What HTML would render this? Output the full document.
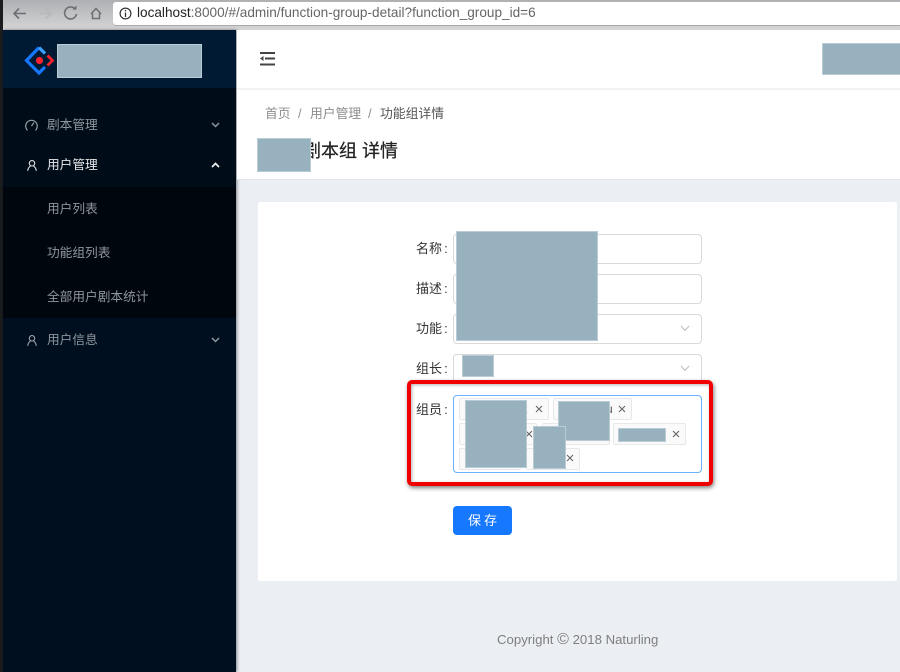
<!DOCTYPE html>
<html lang="zh">
<head>
<meta charset="utf-8">
<style>
html,body{margin:0;padding:0}
body{width:900px;height:672px;overflow:hidden;position:relative;background:#ebeef3;font-family:"Liberation Sans","Noto Sans CJK SC",sans-serif;color:#333}
#w{position:absolute;left:0;top:0;width:900px;height:672px;filter:blur(.35px)}
.a{position:absolute}
.t{position:absolute;white-space:nowrap;line-height:20px}
.blur{position:absolute;background:#97b1bf;box-shadow:0 0 0 1px #b9cbd5}
.input{position:absolute;left:453px;width:247px;height:28px;background:#fff;border:1px solid #d9d9d9;border-radius:4px}
.tag{position:absolute;background:#fafafa;border:1px solid #e8e8e8;border-radius:2px;height:20px}
.label{position:absolute;left:416px;font-size:13px;line-height:20px;color:#333;white-space:nowrap;word-spacing:-1.500px}
.menu{font-size:12.700px}
.x{position:absolute}
</style>
</head>
<body>
<div id="w">
<!-- browser chrome -->
<div class="a" style="left:0;top:0;width:900px;height:30px;background:linear-gradient(#aeb0b3,#d6d6d7)"></div>
<div class="a" style="left:0;top:0;width:3px;height:672px;background:#1a1c1e"></div>
<div class="a" style="left:113px;top:2px;width:787px;height:23px;background:#fff;border-radius:3px 0 0 3px;box-shadow:0 1px 0 #a9a9a9"></div>
<div class="a" style="left:113px;top:28px;width:787px;height:2px;background:#d4d4d4"></div>
<svg class="a" style="left:10px;top:4px" width="105" height="20" viewBox="0 0 105 20" fill="none">
<path d="M4 9.500H16M9 4.500L4 9.500L9 14.500" stroke="#6d6f72" stroke-width="1.600"/>
<path d="M29 9.500H41M36 4.500L41 9.500L36 14.500" stroke="#b5b7ba" stroke-width="1.600"/>
<path d="M65.500 5.500A6 6 0 1 0 66.500 10" stroke="#6d6f72" stroke-width="1.600"/>
<path d="M62.500 5.500H66.500V1.500Z" fill="#6d6f72"/>
<path d="M81 10L86 4.500L91 10M82.500 9V14.500H89.500V9" stroke="#6d6f72" stroke-width="1.500"/>
</svg>
<svg class="a" style="left:119px;top:7px" width="13" height="13" viewBox="0 0 13 13" fill="none">
<circle cx="6.500" cy="6.500" r="5.400" stroke="#333" stroke-width="1.200"/>
<path d="M6.500 5.500V10M6.500 3V4.400" stroke="#333" stroke-width="1.300"/>
</svg>
<div class="t" style="left:137px;top:3px;font-size:13.600px;color:#666"><span style="color:#222">localhost</span>:8000/#/admin/function-group-detail?function_group_id=6</div>

<!-- sidebar -->
<div class="a" style="left:3px;top:30px;width:233px;height:642px;background:#001529;box-shadow:1px 0 3px rgba(0,0,0,.45)"></div>
<div class="a" style="left:3px;top:30px;width:233px;height:58px;background:#001a33"></div>
<div class="a" style="left:3px;top:88px;width:233px;height:99px;background:#000c18"></div>
<div class="a" style="left:3px;top:187px;width:233px;height:131px;background:#00060d"></div>
<div class="a" style="left:3px;top:318px;width:233px;height:354px;background:#000f1f"></div>
<svg class="a" style="left:24px;top:45px" width="32" height="32" viewBox="0 0 32 32" fill="none">
<path d="M15 2.500L2.500 15.500L15 28L21 22" stroke="#1677ff" stroke-width="3.200"/>
<path d="M15 2.500L21 8.500" stroke="#3aa0ff" stroke-width="3.200"/>
<path d="M23.500 10.500L28.500 15.500L23.500 20.500" stroke="#f5222d" stroke-width="2.800"/>
<circle cx="15.500" cy="15.500" r="3.600" fill="#f5222d"/>
</svg>
<div class="blur" style="left:58px;top:45px;width:143px;height:32px"></div>

<svg class="a" style="left:25px;top:119px" width="13" height="12" viewBox="0 0 13 12" fill="none">
<path d="M2.500 11.300A5.800 5.800 0 1 1 10.500 11.300" stroke="#9ea5ab" stroke-width="1.100"/>
<path d="M6.500 7L9 3.500" stroke="#9ea5ab" stroke-width="1.100"/>
</svg>
<div class="t menu" style="left:47px;top:115px;color:#8f979d">剧本管理</div>
<svg class="a" style="left:211px;top:122px" width="9" height="6" viewBox="0 0 9 6" fill="none"><path d="M1 1L4.500 4.500L8 1" stroke="#8f979d" stroke-width="1.500"/></svg>

<svg class="a" style="left:27px;top:160px" width="10" height="11" viewBox="0 0 10 11" fill="none">
<circle cx="5" cy="3.300" r="2.700" stroke="#e4e6e8" stroke-width="1.100"/>
<path d="M.7 10.800C1 8 2.600 6.600 3.300 6M9.300 10.800C9 8 7.400 6.600 6.700 6" stroke="#e4e6e8" stroke-width="1.100"/>
</svg>
<div class="t menu" style="left:47px;top:155px;color:#e6e8ea">用户管理</div>
<svg class="a" style="left:211px;top:162px" width="9" height="6" viewBox="0 0 9 6" fill="none"><path d="M1 5L4.500 1.500L8 5" stroke="#f0f0f0" stroke-width="1.700"/></svg>

<div class="t menu" style="left:47px;top:199px;color:#8f979d">用户列表</div>
<div class="t menu" style="left:47px;top:243px;color:#8f979d">功能组列表</div>
<div class="t menu" style="left:47px;top:287px;color:#8f979d">全部用户剧本统计</div>

<svg class="a" style="left:27px;top:335px" width="10" height="11" viewBox="0 0 10 11" fill="none">
<circle cx="5" cy="3.300" r="2.700" stroke="#9ea5ab" stroke-width="1.100"/>
<path d="M.7 10.800C1 8 2.600 6.600 3.300 6M9.300 10.800C9 8 7.400 6.600 6.700 6" stroke="#9ea5ab" stroke-width="1.100"/>
</svg>
<div class="t menu" style="left:47px;top:330px;color:#8f979d">用户信息</div>
<svg class="a" style="left:211px;top:337px" width="9" height="6" viewBox="0 0 9 6" fill="none"><path d="M1 1L4.500 4.500L8 1" stroke="#8f979d" stroke-width="1.500"/></svg>

<!-- header -->
<div class="a" style="left:237px;top:30px;width:663px;height:58px;background:#fff;border-bottom:2px solid #f1f2f4"></div>
<svg class="a" style="left:259px;top:51px" width="17" height="16" viewBox="0 0 17 16" fill="none">
<path d="M1 2H16M6 7.500H16M1 13.500H16" stroke="#444" stroke-width="1.900"/>
<path d="M4.500 5V10L1 7.500Z" fill="#444"/>
</svg>
<div class="blur" style="left:823px;top:44px;width:77px;height:30px"></div>

<!-- page head -->
<div class="a" style="left:237px;top:90px;width:663px;height:89px;background:#fff;border-bottom:1px solid #e4e6ea"></div>
<div class="t" style="left:265px;top:104px;font-size:12.800px;color:#8c8c8c">首页</div>
<div class="t" style="left:298px;top:104px;font-size:12.800px;color:#8c8c8c">/</div>
<div class="t" style="left:310px;top:104px;font-size:12.800px;color:#8c8c8c">用户管理</div>
<div class="t" style="left:368px;top:104px;font-size:12.800px;color:#8c8c8c">/</div>
<div class="t" style="left:380px;top:104px;font-size:12.800px;color:#555">功能组详情</div>
<div class="t" style="left:303px;top:139px;font-size:18px;line-height:24px;color:#222;-webkit-text-stroke:.25px #222">剧本组 详情</div>
<div class="blur" style="left:258px;top:139px;width:52px;height:32px"></div>

<!-- card -->
<div class="a" style="left:258px;top:202px;width:639px;height:379px;background:#fff;border-radius:2px"></div>

<div class="label" style="top:239px">名称 :</div>
<div class="label" style="top:279px">描述 :</div>
<div class="label" style="top:319px">功能 :</div>
<div class="label" style="top:359px">组长 :</div>
<div class="label" style="top:400px">组员 :</div>

<div class="input" style="top:234px"></div>
<div class="input" style="top:274px"></div>
<div class="input" style="top:314px"></div>
<div class="input" style="top:354px"></div>
<svg class="a" style="left:680px;top:325px" width="10" height="7" viewBox="0 0 10 7" fill="none"><path d="M1 1L5 5.500L9 1" stroke="#bfbfbf" stroke-width="1.100"/></svg>
<svg class="a" style="left:680px;top:365px" width="10" height="7" viewBox="0 0 10 7" fill="none"><path d="M1 1L5 5.500L9 1" stroke="#bfbfbf" stroke-width="1.100"/></svg>
<div class="blur" style="left:463px;top:356px;width:30px;height:20px"></div>
<div class="blur" style="left:457px;top:232px;width:140px;height:108px"></div>

<!-- members -->
<div class="a" style="left:453px;top:395px;width:247px;height:76px;background:#fff;border:1px solid #69b1ff;border-radius:4px"></div>
<div class="tag" style="left:459px;top:398px;width:88px"></div>
<div class="tag" style="left:553px;top:398px;width:77px"></div>
<div class="tag" style="left:459px;top:423px;width:76px"></div>
<div class="tag" style="left:542px;top:423px;width:66px"></div>
<div class="tag" style="left:613px;top:423px;width:71px"></div>
<div class="tag" style="left:459px;top:448px;width:60px"></div>
<div class="tag" style="left:526px;top:448px;width:52px"></div>
<div class="t" style="left:524px;top:399px;font-size:12px;color:#555">t</div>
<div class="t" style="left:606px;top:399px;font-size:12px;color:#555">u</div>
<svg class="x" style="left:535px;top:405px" width="8" height="8" viewBox="0 0 8 8" fill="none"><path d="M1 1L7 7M7 1L1 7" stroke="#666" stroke-width="1.100"/></svg>
<svg class="x" style="left:618px;top:405px" width="8" height="8" viewBox="0 0 8 8" fill="none"><path d="M1 1L7 7M7 1L1 7" stroke="#666" stroke-width="1.100"/></svg>
<svg class="x" style="left:525px;top:430px" width="8" height="8" viewBox="0 0 8 8" fill="none"><path d="M1 1L7 7M7 1L1 7" stroke="#666" stroke-width="1.100"/></svg>
<svg class="x" style="left:672px;top:430px" width="8" height="8" viewBox="0 0 8 8" fill="none"><path d="M1 1L7 7M7 1L1 7" stroke="#666" stroke-width="1.100"/></svg>
<svg class="x" style="left:566px;top:454px" width="8" height="8" viewBox="0 0 8 8" fill="none"><path d="M1 1L7 7M7 1L1 7" stroke="#666" stroke-width="1.100"/></svg>
<div class="blur" style="left:466px;top:401px;width:60px;height:66px"></div>
<div class="blur" style="left:559px;top:402px;width:50px;height:38px"></div>
<div class="blur" style="left:534px;top:427px;width:31px;height:41px"></div>
<div class="blur" style="left:619px;top:429px;width:46px;height:12px"></div>

<!-- red highlight -->
<div class="a" style="left:407px;top:380px;width:298px;height:98px;border:4px solid #f00000;border-radius:5px;box-shadow:1px 2px 4px rgba(0,0,0,.5),inset 1px 1px 3px rgba(0,0,0,.3)"></div>

<!-- button -->
<div class="a" style="left:453px;top:506px;width:59px;height:29px;background:#1677ff;border-radius:4px;color:#fff;font-size:13px;line-height:29px;text-align:center;letter-spacing:3px;text-indent:3px">保存</div>

<!-- footer -->
<div class="t" style="left:497px;top:630px;font-size:13.200px;color:#7f7f7f">Copyright <span style="font-size:16px;line-height:16px">©</span> 2018 Naturling</div>
</div>
</body>
</html>
